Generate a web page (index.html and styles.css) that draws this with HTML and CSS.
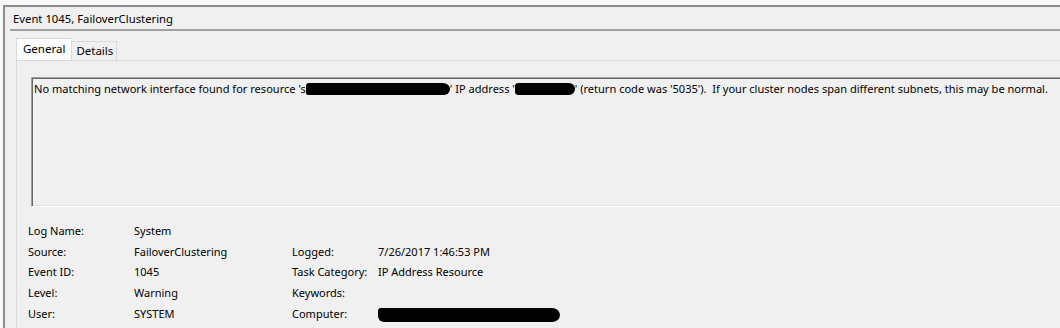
FILE: index.html
```html
<!DOCTYPE html>
<html>
<head>
<meta charset="utf-8">
<link rel="stylesheet" href="styles.css">
</head>
<body>
<div class="frame">
  <div class="header"><span class="title">Event 1045, FailoverClustering</span></div>
  <div class="tabs">
    <div class="tab selected">General</div>
    <div class="tab">Details</div>
  </div>
  <div class="panel">
    <div class="message">No matching network interface found for resource 's<span class="redact r1"></span>' IP address '<span class="redact r2"></span>' (return code was '5035').&nbsp; If your cluster nodes span different subnets, this may be normal.</div>
    <div class="props">
      <span class="lbl">Log Name:</span><span class="val">System</span><span></span><span></span>
      <span class="lbl">Source:</span><span class="val">FailoverClustering</span><span class="lbl">Logged:</span><span class="val">7/26/2017 1:46:53 PM</span>
      <span class="lbl">Event ID:</span><span class="val">1045</span><span class="lbl">Task Category:</span><span class="val">IP Address Resource</span>
      <span class="lbl">Level:</span><span class="val">Warning</span><span class="lbl">Keywords:</span><span class="val"></span>
      <span class="lbl">User:</span><span class="val">SYSTEM</span><span class="lbl">Computer:</span><span class="val"><span class="redact r3"></span></span>
    </div>
  </div>
</div>
</body>
</html>
```
FILE: styles.css
```css
html, body {
  margin: 0;
  padding: 0;
  width: 1060px;
  height: 328px;
  overflow: hidden;
  background: #f9f9f9;
  font-family: "Noto Sans", "Open Sans", sans-serif;
  font-size: 11px;
  color: #000;
}
.frame {
  margin: 5px 0 0 3px;
  height: 323px;
  border-top: 2px solid #8c8c8c;
  border-left: 2px solid #8c8c8c;
  background: #f0f0f0;
  box-sizing: border-box;
  display: flex;
  flex-direction: column;
  overflow: hidden;
}
.header {
  margin-left: 5px;
  height: 22px;
  flex: none;
  border-bottom: 2px solid #a0a0a0;
  display: flex;
  align-items: center;
}
.title {
  padding-left: 3px;
  font-size: 11.3px;
}
.tabs {
  display: flex;
  align-items: flex-end;
  margin-top: 7px;
  margin-left: 11px;
  height: 22px;
  flex: none;
}
.tab {
  height: 18px;
  line-height: 18px;
  padding: 0 3px 0 4px;
  border: 1px solid #d9d9d9;
  border-bottom: none;
  background: #f0f0f0;
  font-size: 11.5px;
}
.tab.selected {
  height: 21px;
  line-height: 20px;
  padding: 0 6px;
  background: #fcfcfc;
  border-right: none;
}
.panel {
  flex: 1;
  margin-left: 11px;
  border-top: 1px solid #d9d9d9;
  border-left: 1px solid #d9d9d9;
  padding: 16px 0 0 14px;
}
.message {
  width: 1050px;
  height: 130px;
  box-sizing: border-box;
  border-top: 1px solid #a0a0a0;
  border-left: 1px solid #a0a0a0;
  border-bottom: 1px solid #ffffff;
  box-shadow: inset 1px 1px 0 #696969, inset 0 -1px 0 #e3e3e3;
  padding: 3px 0 0 2px;
  white-space: nowrap;
  line-height: 16px;
  font-size: 11.05px;
}
.redact {
  display: inline-block;
  background: #000;
  vertical-align: -2px;
}
.r1 {
  width: 144px;
  height: 12px;
  border-radius: 3px 7px 6px 2px / 3px 6px 6px 2px;
}
.r2 {
  width: 60px;
  height: 12px;
  border-radius: 4px 7px 7px 4px;
}
.r3 {
  width: 182px;
  height: 14px;
  border-radius: 3px 8px 8px 6px / 3px 7px 7px 6px;
  vertical-align: -4px;
}
.props {
  margin-top: 13px;
  margin-left: -3px;
  display: grid;
  grid-template-columns: 106px 158px 86px auto;
  grid-auto-rows: 20.8px;
  align-items: center;
}
.lbl, .val {
  white-space: nowrap;
}
```
